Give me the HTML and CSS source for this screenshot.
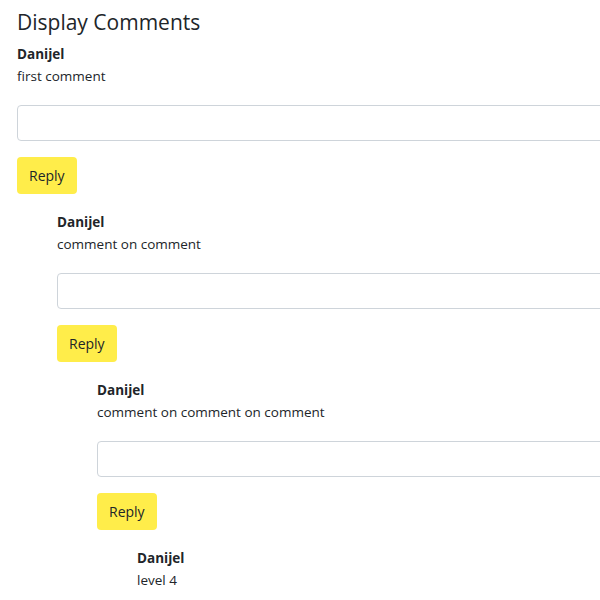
FILE: index.html
```html
<!DOCTYPE html>
<html>
<head>
<meta charset="utf-8">
<link rel="stylesheet" href="styles.css">
</head>
<body>
<div class="page">
  <h4 class="title">Display Comments</h4>
  <div class="comment">
    <strong class="author">Danijel</strong>
    <p class="text">first comment</p>
    <form class="reply-form">
      <input class="field" type="text">
      <button class="btn" type="button">Reply</button>
    </form>
    <div class="comment nested">
      <strong class="author">Danijel</strong>
      <p class="text">comment on comment</p>
      <form class="reply-form">
        <input class="field" type="text">
        <button class="btn" type="button">Reply</button>
      </form>
      <div class="comment nested">
        <strong class="author">Danijel</strong>
        <p class="text">comment on comment on comment</p>
        <form class="reply-form">
          <input class="field" type="text">
          <button class="btn" type="button">Reply</button>
        </form>
        <div class="comment nested">
          <strong class="author">Danijel</strong>
          <p class="text">level 4</p>
          <form class="reply-form">
            <input class="field" type="text">
            <button class="btn" type="button">Reply</button>
          </form>
        </div>
      </div>
    </div>
  </div>
</div>
</body>
</html>
```
FILE: styles.css
```css
html, body {
  margin: 0;
  padding: 0;
  background: #fff;
}
body {
  font-family: "Open Sans", "Noto Sans", sans-serif;
  font-size: 13.5px;
  line-height: 22px;
  color: #212529;
  overflow: hidden;
}
.page {
  padding: 0 0 0 17px;
  width: 640px;
}
.title {
  margin: 0;
  padding-top: 8px;
  font-size: 21px;
  font-weight: 400;
  line-height: 28px;
  margin-bottom: 7px;
}
.author {
  display: block;
  font-weight: 700;
}
.text {
  margin: 0 0 18px;
}
.reply-form {
  display: flex;
  flex-direction: column;
  align-items: flex-start;
  gap: 16px;
  margin-bottom: 17px;
}
.field {
  box-sizing: border-box;
  width: 100%;
  height: 36px;
  border: 1px solid #ced4da;
  border-radius: 4px;
  background: #fff;
  margin: 0;
}
.btn {
  box-sizing: border-box;
  height: 37px;
  padding: 0 12px;
  border: 0;
  border-radius: 4px;
  background: #ffed4a;
  color: #212529;
  font-family: inherit;
  font-size: 14px;
  line-height: 22px;
}
.nested {
  margin-left: 40px;
}
```
